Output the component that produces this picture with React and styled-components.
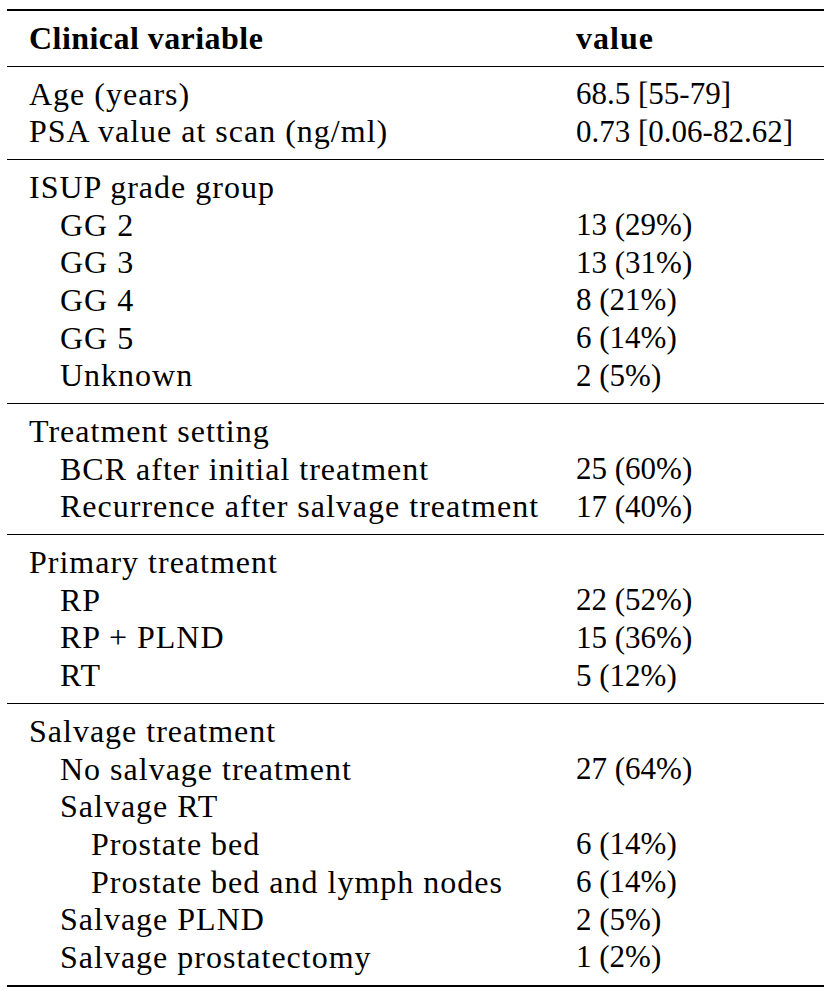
import React from "react";
import styled, { createGlobalStyle } from "styled-components";

const GlobalStyle = createGlobalStyle`
  html, body { margin: 0; padding: 0; background: #fff; }
`;

const Table = styled.div`
  margin: 9px 0 0 7px;
  width: 817px;
  border-top: 2px solid #000;
  border-bottom: 2px solid #000;
  font-family: "Liberation Serif", "Times New Roman", serif;
  color: #000;
`;

const Section = styled.div`
  padding: 8.5px 0;
  & + & {
    border-top: 1px solid #000;
  }
`;

const Row = styled.div`
  display: grid;
  grid-template-columns: 569px 1fr;
  height: 37.7px;
  align-items: center;
  white-space: nowrap;
  font-weight: ${(p) => (p.$head ? 700 : 400)};
`;

const Label = styled.div`
  padding-left: ${(p) => 22 + p.$level * 31}px;
  font-size: 32px;
  letter-spacing: ${(p) => (p.$head ? "0.45px" : "1px")};
`;

const Value = styled.div`
  font-size: ${(p) => (p.$head ? "32px" : "31px")};
  letter-spacing: ${(p) => (p.$head ? "1px" : "0")};
`;

const sections = [
  [["Clinical variable", "value", 0]],
  [
    ["Age (years)", "68.5 [55-79]", 0],
    ["PSA value at scan (ng/ml)", "0.73 [0.06-82.62]", 0],
  ],
  [
    ["ISUP grade group", "", 0],
    ["GG 2", "13 (29%)", 1],
    ["GG 3", "13 (31%)", 1],
    ["GG 4", "8 (21%)", 1],
    ["GG 5", "6 (14%)", 1],
    ["Unknown", "2 (5%)", 1],
  ],
  [
    ["Treatment setting", "", 0],
    ["BCR after initial treatment", "25 (60%)", 1],
    ["Recurrence after salvage treatment", "17 (40%)", 1],
  ],
  [
    ["Primary treatment", "", 0],
    ["RP", "22 (52%)", 1],
    ["RP + PLND", "15 (36%)", 1],
    ["RT", "5 (12%)", 1],
  ],
  [
    ["Salvage treatment", "", 0],
    ["No salvage treatment", "27 (64%)", 1],
    ["Salvage RT", "", 1],
    ["Prostate bed", "6 (14%)", 2],
    ["Prostate bed and lymph nodes", "6 (14%)", 2],
    ["Salvage PLND", "2 (5%)", 1],
    ["Salvage prostatectomy", "1 (2%)", 1],
  ],
];

export default function App() {
  return (
    <>
      <GlobalStyle />
      <Table>
        {sections.map((rows, si) => (
          <Section key={si}>
            {rows.map(([label, value, level], ri) => (
              <Row key={ri} $head={si === 0}>
                <Label $level={level} $head={si === 0}>
                  {label}
                </Label>
                <Value $head={si === 0}>{value}</Value>
              </Row>
            ))}
          </Section>
        ))}
      </Table>
    </>
  );
}
